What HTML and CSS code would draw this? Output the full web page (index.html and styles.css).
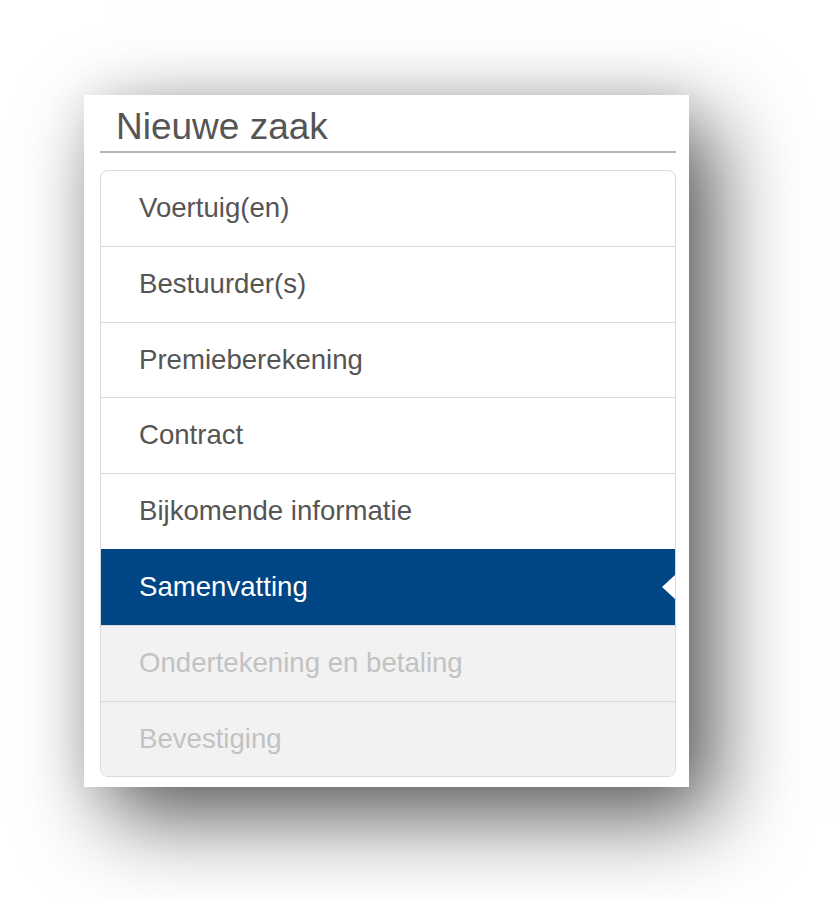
FILE: index.html
```html
<!DOCTYPE html>
<html>
<head>
<meta charset="UTF-8">
<title>Nieuwe zaak</title>
<link rel="stylesheet" href="styles.css">
</head>
<body>
	<div class="kaart">
		<h1 class="titel">Nieuwe zaak</h1>
		<ul class="stappen">
			<li class="stap">Voertuig(en)</li>
			<li class="stap">Bestuurder(s)</li>
			<li class="stap">Premieberekening</li>
			<li class="stap">Contract</li>
			<li class="stap">Bijkomende informatie</li>
			<li class="stap actief">Samenvatting</li>
			<li class="stap uit">Ondertekening en betaling</li>
			<li class="stap uit">Bevestiging</li>
		</ul>
	</div>
</body>
</html>
```

FILE: styles.css
```css
html {
	background: #fff;
}

body {
	margin: 0;
	height: 900px;
	box-sizing: border-box;
	overflow: hidden;
	font-family: "Liberation Sans", Arial, sans-serif;
	padding: 95px 0 0 84px;
}

.kaart {
	width: 605px;
	height: 692px;
	box-sizing: border-box;
	background: #fff;
	padding: 0 13px 0 16px;
	box-shadow: 25px 30px 80px rgba(0, 0, 0, 0.65), 0 0 40px rgba(0, 0, 0, 0.08);
}

.titel {
	margin: 0;
	padding: 11px 0 0 16px;
	height: 45px;
	font-size: 37px;
	font-weight: normal;
	line-height: 42px;
	color: #555;
	border-bottom: 2px solid #b3b3b3;
}

.stappen {
	list-style: none;
	margin: 17px 0 0 0;
	padding: 0;
	border: 1px solid #d9d9d9;
	border-radius: 8px;
	overflow: hidden;
}

.stap {
	position: relative;
	height: 74.8px;
	line-height: 74.8px;
	padding-left: 38px;
	font-size: 27.6px;
	color: #555;
	border-top: 1px solid #d9d9d9;
}

.stap:first-child {
	border-top: none;
}

.actief {
	background: #004684;
	color: #fff;
	border-top-color: #004684;
}

.actief::after {
	content: "";
	position: absolute;
	right: 0;
	top: 50%;
	margin-top: -12px;
	border-style: solid;
	border-width: 12px 13px 12px 0;
	border-color: transparent #fff transparent transparent;
}

.uit {
	background: #f2f2f2;
	color: #c2c2c2;
}
```
